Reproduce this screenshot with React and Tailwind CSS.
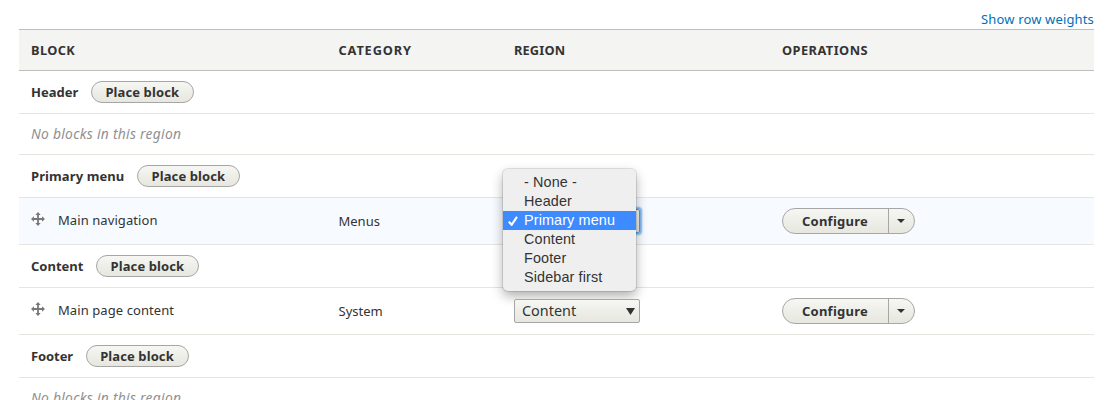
const COLS = "grid grid-cols-[307.5px_175.5px_268px_1fr] border-b";

function PlaceBlock() {
  return (
    <button className="h-[22px] w-[103px] shrink-0 rounded-full border border-[#a6a6a6] bg-linear-to-b from-[#f6f6f3] to-[#e7e7df] pr-px text-center text-[13px] leading-[20px] font-bold tracking-[0.1px] whitespace-nowrap text-[#333]">
      Place block
    </button>
  );
}

function RegionRow({ title, spacing = "" }) {
  return (
    <div className="flex h-[43px] items-center gap-[13px] border-b border-[#e6e4df] pl-3">
      <b className={`pt-px ${spacing}`}>{title}</b>
      <PlaceBlock />
    </div>
  );
}

function EmptyRow() {
  return (
    <div className="h-[41px] border-b border-[#e6e4df] pl-3 text-[13.8px] leading-[40px] tracking-[0.29px] text-[#909090] italic">
      No blocks in this region
    </div>
  );
}

function MoveIcon() {
  return (
    <svg className="mt-[14px] h-[14px] w-[14px] shrink-0" viewBox="0 0 14 14" fill="#787878">
      <path d="M7 0 9.7 3H7.9V6.1H11V4.3L14 7 11 9.7V7.9H7.9V11H9.7L7 14 4.3 11H6.1V7.9H3V9.7L0 7 3 4.3V6.1H6.1V3H4.3Z" />
    </svg>
  );
}

function Configure() {
  return (
    <div className="mt-[10px] flex h-[26px] w-[133px] overflow-hidden rounded-full border border-[#a6a6a6] bg-linear-to-b from-[#f6f6f3] to-[#e7e7df]">
      <button className="w-[106px] border-r border-[#a6a6a6] pr-px text-center text-[13px] leading-[25px] font-bold tracking-[0.25px] text-[#333]">
        Configure
      </button>
      <button className="flex flex-1 items-center justify-center pr-px" aria-label="More operations">
        <svg className="h-1 w-2" viewBox="0 0 8 4" fill="#333">
          <path d="M0 0H8L4 4Z" />
        </svg>
      </button>
    </div>
  );
}

function Select({ value, open, children }) {
  const ring = open ? "border-[#40a0f0] shadow-[0_0_2px_2px_#7db4ea]" : "border-[#a6a6a6]";
  return (
    <div className="relative mt-[11px] w-[126px]">
      <div className={`flex h-6 items-center justify-between rounded-[2px] border bg-linear-to-b from-[#f6f6f3] to-[#e7e7df] pr-[4px] pl-[7px] text-[14.4px] text-[#333] ${ring}`}>
        <span className="leading-[22px] whitespace-nowrap">{value}</span>
        {!open && (
          <svg className="mt-px h-[7px] w-[9px] shrink-0" viewBox="0 0 9 7" fill="#333">
            <path d="M0 0H9L4.5 7Z" />
          </svg>
        )}
      </div>
      {children}
    </div>
  );
}

function Menu() {
  return (
    <ul className="absolute -top-[40px] -left-[11px] h-[122px] w-[133px] rounded-[5px] bg-[#efefef] pt-1 font-['Liberation_Sans',Arial,sans-serif] text-[14.4px] leading-[19px] tracking-[0.12px] text-[#333] shadow-[0_0_0_1px_rgba(0,0,0,0.1),0_5px_12px_rgba(0,0,0,0.32)]">
      {["- None -", "Header", "Primary menu", "Content", "Footer", "Sidebar first"].map((name) => {
        const selected = name === "Primary menu";
        return (
          <li key={name} className={`flex h-[19px] items-center whitespace-nowrap ${selected ? "bg-[#3e8bff] text-white" : ""}`}>
            <span className="flex w-[21px] shrink-0 pl-[5px]">
              {selected && (
                <svg className="h-[10px] w-[10px]" viewBox="0 0 10 10" fill="none" stroke="white" strokeWidth="2.1">
                  <path d="M0.8 5.6 3.6 8.8 9 0.8" />
                </svg>
              )}
            </span>
            {name}
          </li>
        );
      })}
    </ul>
  );
}

function BlockRow({ name, category, active, children }) {
  return (
    <div className={`${COLS} h-[47px] border-[#e6e4df] ${active ? "bg-[#f7fbff]" : ""}`}>
      <div className="flex gap-[13px] pl-3">
        <MoveIcon />
        <span className="leading-[45px] tracking-[0.08px]">{name}</span>
      </div>
      <div className="pl-3 leading-[46px]">{category}</div>
      <div className="pl-3">{children}</div>
      <div className="pl-3">
        <Configure />
      </div>
    </div>
  );
}

export default function App() {
  return (
    <main className="h-[400px] overflow-hidden bg-white pr-5 pl-[19px] font-['Noto_Sans',sans-serif] text-[13px] text-[#333]">
      <div className="flex h-[29px] items-start justify-end pt-[9px] leading-5 tracking-[0.15px] text-[#0071b8]">
        <a>Show row weights</a>
      </div>
      <div className={`${COLS} h-[42px] border-t border-[#bfbfba] bg-[#f4f4f2] text-[12.8px] leading-[41px] font-bold`}>
        <div className="pl-3 tracking-[0.4px]">BLOCK</div>
        <div className="pl-3 tracking-[0.85px]">CATEGORY</div>
        <div className="pl-3 tracking-[0.15px]">REGION</div>
        <div className="pl-3 tracking-[0.45px]">OPERATIONS</div>
      </div>
      <RegionRow title="Header" />
      <EmptyRow />
      <RegionRow title="Primary menu" spacing="tracking-[0.1px]" />
      <BlockRow name="Main navigation" category="Menus" active>
        <Select open>
          <Menu />
        </Select>
      </BlockRow>
      <RegionRow title="Content" />
      <BlockRow name="Main page content" category="System">
        <Select value="Content" />
      </BlockRow>
      <RegionRow title="Footer" spacing="tracking-[-0.1px]" />
      <EmptyRow />
    </main>
  );
}
